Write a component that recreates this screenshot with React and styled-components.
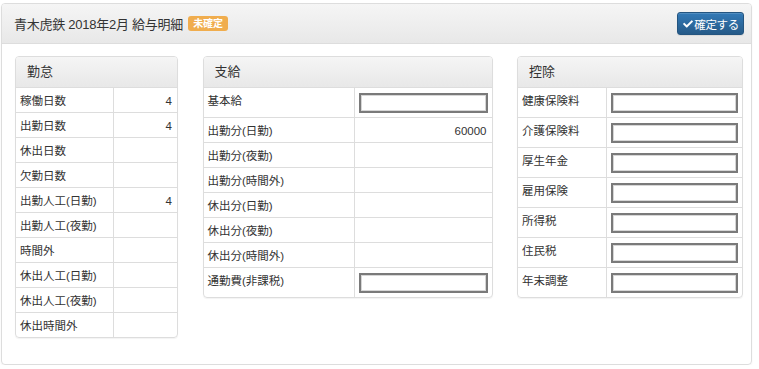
import React from 'react';
import styled, { createGlobalStyle } from 'styled-components';
import { FaCheck } from 'react-icons/fa';

const GlobalStyle = createGlobalStyle`
  body {
    margin: 0;
    background: #fff;
    color: #333;
    font-family: 'Liberation Sans', Arial, 'Noto Sans CJK JP', sans-serif;
  }
`;

const attendance = [
  { label: '稼働日数', value: '4' },
  { label: '出勤日数', value: '4' },
  { label: '休出日数' },
  { label: '欠勤日数' },
  { label: '出勤人工(日勤)', value: '4' },
  { label: '出勤人工(夜勤)' },
  { label: '時間外' },
  { label: '休出人工(日勤)' },
  { label: '休出人工(夜勤)' },
  { label: '休出時間外' },
];

const payments = [
  { label: '基本給', input: true },
  { label: '出勤分(日勤)', value: '60000' },
  { label: '出勤分(夜勤)' },
  { label: '出勤分(時間外)' },
  { label: '休出分(日勤)' },
  { label: '休出分(夜勤)' },
  { label: '休出分(時間外)' },
  { label: '通勤費(非課税)', input: true },
];

const deductions = [
  { label: '健康保険料', input: true },
  { label: '介護保険料', input: true },
  { label: '厚生年金', input: true },
  { label: '雇用保険', input: true },
  { label: '所得税', input: true },
  { label: '住民税', input: true },
  { label: '年末調整', input: true },
];

const Section = ({ title, rows, width, labelWidth }) => (
  <Card width={width}>
    <CardHeading>{title}</CardHeading>
    <Table>
      <colgroup>
        <col style={{ width: labelWidth }} />
        <col />
      </colgroup>
      <tbody>
        {rows.map((row) => (
          <tr key={row.label}>
            <Label>{row.label}</Label>
            <Value hasInput={row.input}>
              {row.input ? <TextInput type="text" /> : row.value}
            </Value>
          </tr>
        ))}
      </tbody>
    </Table>
  </Card>
);

const App = () => {
  return (
    <>
      <GlobalStyle />
      <Panel>
        <Heading>
          <Title>
            青木虎鉄 2018年2月 給与明細
            <Badge>未確定</Badge>
          </Title>
          <ConfirmButton>
            <FaCheck size="10" />
            確定する
          </ConfirmButton>
        </Heading>
        <Body>
          <Section title="勤怠" rows={attendance} width={163} labelWidth={97} />
          <Section title="支給" rows={payments} width={290} labelWidth={151} />
          <Section title="控除" rows={deductions} width={226} labelWidth={88} />
        </Body>
      </Panel>
    </>
  );
};

const Panel = styled.div`
  margin: 3px 7px 0 1px;
  height: 360px;
  border: 1px solid #ddd;
  border-radius: 4px;
  box-shadow: 0 1px 2px rgba(0, 0, 0, 0.05);
  overflow: hidden;
`;

const Heading = styled.div`
  display: flex;
  align-items: center;
  justify-content: space-between;
  height: 39px;
  padding: 0 7px 0 12px;
  background: linear-gradient(to bottom, #f5f5f5 0, #e8e8e8 100%);
  border-bottom: 1px solid #ddd;
`;

const Title = styled.div`
  display: flex;
  align-items: center;
  font-size: 13px;
  letter-spacing: -0.25px;
  color: #333;
`;

const Badge = styled.span`
  display: inline-block;
  margin-left: 5px;
  padding: 0 5px;
  height: 15px;
  line-height: 15px;
  border-radius: 3px;
  background: #f0ad4e;
  color: #fff;
  font-size: 10px;
  font-weight: 700;
  letter-spacing: 0;
`;

const ConfirmButton = styled.button`
  display: inline-flex;
  align-items: center;
  gap: 0;
  height: 23px;
  padding: 0 4px 0 5px;
  border: 1px solid #245580;
  border-radius: 3px;
  background: linear-gradient(to bottom, #337ab7 0, #265a88 100%);
  box-shadow: inset 0 1px 0 rgba(255, 255, 255, 0.15), 0 1px 1px rgba(0, 0, 0, 0.075);
  color: #fff;
  font-family: inherit;
  font-size: 11.5px;
  letter-spacing: -0.3px;
  cursor: pointer;

  svg {
    margin-right: 1px;
  }
`;

const Body = styled.div`
  display: flex;
  align-items: flex-start;
  justify-content: space-between;
  padding: 12px 8px 0 13px;
`;

const Card = styled.div`
  width: ${(p) => p.width}px;
  box-sizing: border-box;
  border: 1px solid #ddd;
  border-radius: 4px;
  box-shadow: 0 1px 1px rgba(0, 0, 0, 0.05);
  overflow: hidden;
`;

const CardHeading = styled.div`
  height: 30px;
  line-height: 30px;
  padding: 0 11px;
  font-size: 13px;
  color: #333;
  background: linear-gradient(to bottom, #f5f5f5 0, #e8e8e8 100%);
  border-bottom: 1px solid #ddd;
`;

const Table = styled.table`
  width: 100%;
  border-collapse: collapse;
  table-layout: fixed;
  font-size: 11.5px;
  line-height: 14px;

  tr + tr td {
    border-top: 1px solid #ddd;
  }
`;

const Label = styled.td`
  padding: 6px 4px 4px;
  vertical-align: top;
  white-space: nowrap;
  color: #333;
`;

const Value = styled.td`
  border-left: 1px solid #ddd;
  padding: ${(p) => (p.hasInput ? '5px 4px 4px 4px' : '6px 5px 4px 4px')};
  text-align: right;
  vertical-align: top;
  color: #333;
`;

const TextInput = styled.input`
  display: block;
  box-sizing: border-box;
  width: 100%;
  height: 20px;
  margin: 0;
  padding: 1px 2px;
  border: 2px solid #7a7a7a;
  box-shadow: inset 0 0 0 1px #d6d6d6;
  background: #fff;
  font-size: 12px;
`;

export default App;
